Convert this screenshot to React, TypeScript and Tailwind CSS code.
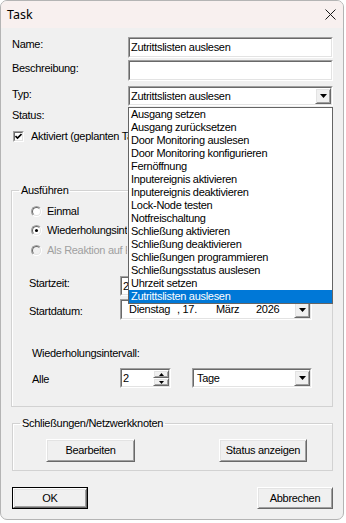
import React from 'react';

const ui = "font-['Liberation_Sans',Arial,sans-serif] text-[11px] leading-[13px] tracking-[-0.3px] text-black";

const typen = [
  'Ausgang setzen',
  'Ausgang zurücksetzen',
  'Door Monitoring auslesen',
  'Door Monitoring konfigurieren',
  'Fernöffnung',
  'Inputereignis aktivieren',
  'Inputereignis deaktivieren',
  'Lock-Node testen',
  'Notfreischaltung',
  'Schließung aktivieren',
  'Schließung deaktivieren',
  'Schließungen programmieren',
  'Schließungsstatus auslesen',
  'Uhrzeit setzen',
  'Zutrittslisten auslesen',
];

function Sunken({ className = '', children }: { className?: string; children?: React.ReactNode }) {
  return (
    <div className={`border border-t-[#a0a0a0] border-l-[#a0a0a0] border-r-white border-b-white ${className}`}>
      <div className="flex h-full w-full items-center border border-t-[#696969] border-l-[#696969] border-r-[#e3e3e3] border-b-[#e3e3e3] bg-white">
        {children}
      </div>
    </div>
  );
}

function Arrow({ up = false, small = false }: { up?: boolean; small?: boolean }) {
  const w = small ? 5 : 7;
  const h = small ? 3 : 4;
  return (
    <svg width={w} height={h} viewBox={`0 0 ${w} ${h}`}>
      <path d={up ? `M0 ${h}H${w}L${w / 2} 0Z` : `M0 0H${w}L${w / 2} ${h}Z`} fill="#000" />
    </svg>
  );
}

function Raised({ className = '', children }: { className?: string; children?: React.ReactNode }) {
  return (
    <div className={`flex items-center justify-center border border-t-white border-l-white border-r-[#696969] border-b-[#696969] bg-[#f0f0f0] shadow-[inset_1px_1px_0_#e3e3e3,inset_-1px_-1px_0_#a0a0a0] ${className}`}>
      {children}
    </div>
  );
}

function Combo({ className = '', children }: { className?: string; children?: React.ReactNode }) {
  return (
    <Sunken className={className}>
      <div className="flex-1 overflow-hidden whitespace-nowrap pl-[1px]">{children}</div>
      <Raised className="h-full w-[16px]">
        <Arrow />
      </Raised>
    </Sunken>
  );
}

function Radio({ checked = false, disabled = false }: { checked?: boolean; disabled?: boolean }) {
  return (
    <span className="flex h-[11px] w-[11px] shrink-0 rounded-full border border-t-[#a0a0a0] border-l-[#a0a0a0] border-r-white border-b-white">
      <span
        className={`flex h-full w-full items-center justify-center rounded-full border border-t-[#696969] border-l-[#696969] border-r-[#e3e3e3] border-b-[#e3e3e3] ${disabled ? 'bg-[#f0f0f0]' : 'bg-white'}`}
      >
        {checked && <span className="h-[3px] w-[3px] rounded-full bg-black" />}
      </span>
    </span>
  );
}

function Button({ children, isDefault = false, className = '' }: { children: React.ReactNode; isDefault?: boolean; className?: string }) {
  return (
    <div className={`${isDefault ? 'border border-black' : ''} ${className}`}>
      <Raised className="h-full w-full">{children}</Raised>
    </div>
  );
}

export default function App() {
  return (
    <div className={`h-[523px] w-[346px] bg-white ${ui}`}>
      <div className="flex h-[520px] w-[344px] flex-col overflow-hidden rounded-[7px] border border-[#b4b4b4] bg-[#f0f0f0]">
        {/* title bar */}
        <div className="flex h-[27px] shrink-0 items-center justify-between bg-[#f8f0ef] pl-[6px] pr-[7px]">
          <span className="font-['Noto_Sans',sans-serif] text-[12.5px] tracking-normal">Task</span>
          <svg width="11" height="11" viewBox="0 0 11 11">
            <path d="M0.5 0.5L10.5 10.5M10.5 0.5L0.5 10.5" stroke="#1a1a1a" strokeWidth="1" />
          </svg>
        </div>

        <div className="flex flex-1 flex-col pl-[11px] pr-[10px]">
          <div className="mt-[9px] flex h-[21px] items-start">
            <span className="w-[116px] pt-[1px]">Name:</span>
            <Sunken className="h-[21px] flex-1">
              <span className="pl-[1px]">Zutrittslisten auslesen</span>
            </Sunken>
          </div>

          <div className="mt-[2px] flex h-[21px] items-start">
            <span className="w-[116px] pt-[2px]">Beschreibung:</span>
            <Sunken className="h-[21px] flex-1" />
          </div>

          <div className="mt-[5px] flex h-[20px] items-start">
            <span className="w-[116px] pt-[2px]">Typ:</span>
            <div className="relative h-[20px] flex-1">
              <Combo className="h-[20px] w-full">Zutrittslisten auslesen</Combo>
              {/* open list of the Typ combo */}
              <div className="absolute left-0 top-[21px] z-10 h-[197px] w-full border border-[#646464] bg-white">
                {typen.map((t, i) => (
                  <div
                    key={t}
                    className={`h-[13px] whitespace-nowrap pl-[2px] leading-[13px] ${i === typen.length - 1 ? 'bg-[#0078d7] text-white' : ''}`}
                  >
                    {t}
                  </div>
                ))}
              </div>
            </div>
          </div>

          <div className="mt-[2px] flex h-[15px] items-center">
            <span className="w-[116px]">Status:</span>
          </div>

          <div className="mt-[7px] flex h-[13px] items-center pl-[1px]">
            <span className="flex h-[11px] w-[11px] shrink-0 border border-t-[#a0a0a0] border-l-[#a0a0a0] border-r-white border-b-white">
              <span className="flex h-full w-full items-center justify-center border border-t-[#696969] border-l-[#696969] border-r-[#e3e3e3] border-b-[#e3e3e3] bg-white">
                <svg width="7" height="7" viewBox="0 0 7 7">
                  <path d="M0.5 3L2.5 5L6.5 1" stroke="#000" strokeWidth="1.6" fill="none" />
                </svg>
              </span>
            </span>
            <span className="ml-[7px] w-[97px] overflow-hidden whitespace-nowrap">Aktiviert (geplanten Task ausführen)</span>
          </div>

          {/* Ausführen */}
          <fieldset className="mt-[41px] -ml-[1px] border border-[#d2d2d2] shadow-[inset_1px_1px_0_#fff]">
            <legend className="ml-[7px] px-[2px]">Ausführen</legend>
            <div className="flex flex-col pb-[18px]">
              <div className="mt-[8px] flex h-[13px] items-center gap-[5px] pl-[19px]">
                <Radio />
                <span>Einmal</span>
              </div>
              <div className="mt-[6px] flex h-[13px] items-center gap-[5px] pl-[19px]">
                <Radio checked />
                <span className="w-[80px] overflow-hidden whitespace-nowrap">Wiederholungsintervall</span>
              </div>
              <div className="mt-[7px] flex h-[13px] items-center gap-[5px] pl-[19px] text-[#a0a0a0]">
                <Radio disabled />
                <span className="w-[80px] overflow-hidden whitespace-nowrap">Als Reaktion auf Ereignis</span>
              </div>

              <div className="mt-[19px] flex h-[20px] items-start pl-[17px]">
                <span className="w-[91px] pt-[1px]">Startzeit:</span>
                <Sunken className="h-[20px] w-[120px]">
                  <span className="w-[6px] overflow-hidden whitespace-nowrap pl-[1px]">20:00:00</span>
                </Sunken>
              </div>

              <div className="mt-[3px] flex h-[21px] items-center pl-[17px]">
                <span className="w-[91px] pt-[4px]">Startdatum:</span>
                <Combo className="h-[21px] w-[192px]">
                  <div className="flex pl-[6px]">
                    <span className="w-[48px]">Dienstag</span>
                    <span className="w-[39px]">, 17.</span>
                    <span className="w-[40px]">März</span>
                    <span>2026</span>
                  </div>
                </Combo>
              </div>

              <div className="mt-[27px] h-[13px] pl-[20px]">Wiederholungsintervall:</div>

              <div className="mt-[8px] flex h-[20px] items-center pl-[20px]">
                <span className="w-[88px] pt-[3px]">Alle</span>
                <Sunken className="h-[20px] w-[51px]">
                  <span className="flex-1 pl-[1px]">2</span>
                  <div className="flex h-full w-[16px] flex-col">
                    <Raised className="flex-1">
                      <Arrow up small />
                    </Raised>
                    <Raised className="flex-1">
                      <Arrow small />
                    </Raised>
                  </div>
                </Sunken>
                <Combo className="ml-[21px] h-[20px] w-[120px]">
                  <span className="pl-[2px]">Tage</span>
                </Combo>
              </div>
            </div>
          </fieldset>

          {/* Schließungen/Netzwerkknoten */}
          <fieldset className="mt-[10px] border border-[#d2d2d2] shadow-[inset_1px_1px_0_#fff]">
            <legend className="ml-[7px] px-[2px]">Schließungen/Netzwerkknoten</legend>
            <div className="flex items-center pb-[8px] pl-[33px] pt-[9px]">
              <Button className="h-[23px] w-[89px]">Bearbeiten</Button>
              <Button className="ml-[84px] h-[23px] w-[88px]">Status anzeigen</Button>
            </div>
          </fieldset>

          <div className="mt-[16px] flex items-center justify-between">
            <Button isDefault className="h-[22px] w-[76px]">
              OK
            </Button>
            <Button className="h-[22px] w-[76px]">Abbrechen</Button>
          </div>
        </div>
      </div>
    </div>
  );
}
